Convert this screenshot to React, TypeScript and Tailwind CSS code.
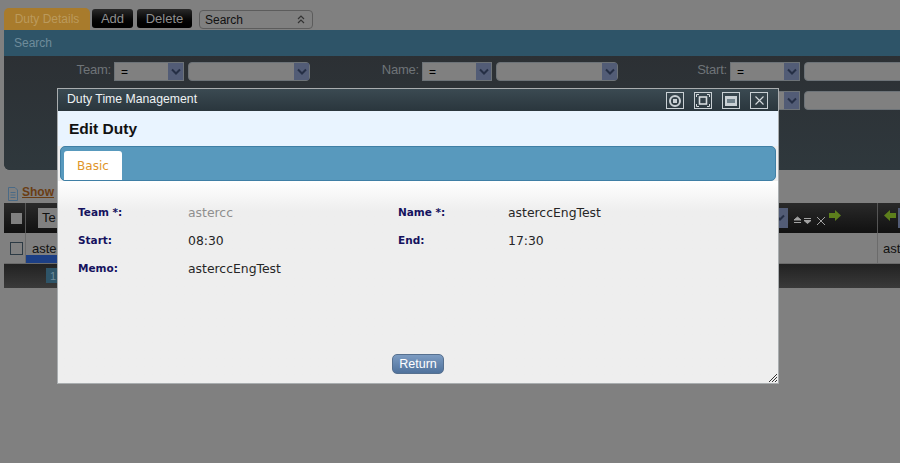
const Chevron = () => (
  <svg width="10" height="8" viewBox="0 0 10 8" fill="none" stroke="#252f45" strokeWidth="2">
    <path d="M1 1.5 L5 5.5 L9 1.5" />
  </svg>
);

const SelectBox = ({ value, width }: { value?: string; width: string }) => (
  <div
    className={`${width} shrink-0 h-[19px] flex items-center justify-between bg-[#808080] border border-[#6d7378] ${
      value ? "" : "rounded-[4px]"
    }`}
  >
    <span className="pl-1.5 text-[12px] text-black">{value}</span>
    <span className="w-[15px] h-[17px] bg-[#525c76] flex items-center justify-center">
      <Chevron />
    </span>
  </div>
);

const Filter = ({ label, labelWidth, wide }: { label?: string; labelWidth: string; wide: string }) => (
  <div className="flex items-center shrink-0">
    <span className={`${labelWidth} shrink-0 text-right pr-[3px] text-[13px] tracking-[-0.2px] text-[#6f7478] -mt-[3px]`}>{label}</span>
    <SelectBox value="=" width="w-[70px]" />
    <div className="w-1 shrink-0" />
    <SelectBox width={wide} />
  </div>
);

const Field = ({ label, value, muted }: { label: string; value: string; muted?: boolean }) => (
  <div className="flex items-center h-[28px] font-['DejaVu_Sans',sans-serif]">
    <span className="w-[110px] text-[10.5px] font-bold text-[#15125e]">{label}</span>
    <span className={`text-[12.4px] ${muted ? "text-[#8f8f8f]" : "text-[#262626]"}`}>{value}</span>
  </div>
);

const WinButton = ({ children }: { children: React.ReactNode }) => (
  <div className="w-[18px] h-[17px] border border-[#c9d0d4] flex items-center justify-center">
    {children}
  </div>
);

const DutyModal = () => (
  <div className="absolute left-[57px] top-[88px] w-[722px] h-[296px] flex flex-col border border-[#a9adaf] bg-[#eeeeee]">
    <div className="h-[22px] shrink-0 flex items-start justify-between pl-[9px] pr-[10px] pt-[3px] bg-gradient-to-b from-[#3b4a52] to-[#2a363d]">
      <span className="text-[12.25px] leading-[14px] text-[#eef2f4]">Duty Time Management</span>
      <div className="flex gap-[10px]">
        <WinButton>
          <div className="w-[12px] h-[12px] rounded-full border-2 border-[#c9d0d4] flex items-center justify-center">
            <div className="w-[4px] h-[4px] bg-[#c9d0d4]" />
          </div>
        </WinButton>
        <WinButton>
          <svg width="14" height="13" viewBox="0 0 14 13" fill="none" stroke="#d5dadd">
            <rect x="3.5" y="3" width="7" height="7" strokeWidth="1.6" />
            <path d="M0.5 3 V0.5 H3 M11 0.5 H13.5 V3 M0.5 10 V12.5 H3 M11 12.5 H13.5 V10" />
          </svg>
        </WinButton>
        <WinButton>
          <div className="w-[12px] h-[10px] bg-[#c9d0d4] flex items-center justify-center">
            <div className="w-[8px] h-[4px] bg-[#6f8089]" />
          </div>
        </WinButton>
        <WinButton>
          <svg width="9" height="9" viewBox="0 0 9 9" stroke="#d5dadd" strokeWidth="1.1">
            <path d="M0.5 0.5 L8.5 8.5 M8.5 0.5 L0.5 8.5" />
          </svg>
        </WinButton>
      </div>
    </div>
    <div className="h-[35px] shrink-0 bg-[#e9f4ff] flex items-center pl-[11px]">
      <h1 className="text-[15.5px] font-bold text-[#111111]">Edit Duty</h1>
    </div>
    <div className="mx-[2px] h-[35px] shrink-0 bg-[#5899bd] border border-[#3f7fa5] rounded-[5px] flex items-end pl-[3px]">
      <div className="w-[58px] h-[29px] bg-white rounded-t-[3px] flex items-center justify-center text-[12px] font-['DejaVu_Sans',sans-serif] text-[#e0962a]">
        Basic
      </div>
    </div>
    <div className="relative flex-1 bg-gradient-to-b from-white to-[#eeeeee] to-[15%] flex flex-col">
      <div className="grid grid-cols-[320px_1fr] pl-[20px] pt-[18px]">
        <Field label="Team *:" value="astercc" muted />
        <Field label="Name *:" value="asterccEngTest" />
        <Field label="Start:" value="08:30" />
        <Field label="End:" value="17:30" />
        <Field label="Memo:" value="asterccEngTest" />
      </div>
      <div className="flex-1 flex items-end justify-center pb-[9px]">
        <button className="w-[52px] h-[20px] rounded-[5px] border border-[#56708f] bg-gradient-to-b from-[#7d9cc2] to-[#4f729c] text-[12.5px] text-white">
          Return
        </button>
      </div>
      <svg className="absolute right-[1px] bottom-[1px]" width="8" height="8" viewBox="0 0 8 8" stroke="#333333">
        <path d="M0 8 L8 0 M3 8 L8 3 M6 8 L8 6" />
      </svg>
    </div>
  </div>
);

export default function App() {
  return (
    <div className="relative w-[900px] h-[463px] overflow-hidden bg-[#808080] font-['Liberation_Sans',sans-serif]">
      <div className="pt-2 pl-[4px]">
        <div className="flex items-start h-[22px]">
          <div className="w-[86px] h-[22px] bg-[#a87b2c] rounded-t-[5px] flex items-center justify-center text-[12px] text-[#bb9a5c]">
            Duty Details
          </div>
          <button className="ml-[2px] mt-[1px] w-[41px] h-[19px] rounded-[3px] bg-gradient-to-b from-[#2a2a2a] to-black text-[13px] text-[#8f8f8f]">
            Add
          </button>
          <button className="ml-1 mt-[1px] w-[55px] h-[19px] rounded-[3px] bg-gradient-to-b from-[#2a2a2a] to-black text-[13px] text-[#8f8f8f]">
            Delete
          </button>
          <div className="ml-[7px] mt-[2px] w-[114px] h-[19px] rounded-[4px] border border-[#5c5c5c] flex items-center justify-between pl-[5px] pr-[7px] text-[12px] text-[#111111]">
            Search
            <svg width="8" height="9" viewBox="0 0 8 9" fill="none" stroke="#333333" strokeWidth="1.2">
              <path d="M1 4 L4 1 L7 4 M1 8 L4 5 L7 8" />
            </svg>
          </div>
        </div>
        <div className="h-[140px] rounded-bl-[6px] bg-[#2e343a] overflow-hidden">
          <div className="h-[26px] bg-[#2e5468] flex items-center pl-[10px] text-[12px] text-[#6f8c9b]">Search</div>
          <div className="h-[114px] bg-gradient-to-b from-[#2c3034] to-[#2f383d] pt-[6px]">
            <div className="flex">
              <div className="w-[306px] shrink-0">
                <Filter label="Team:" labelWidth="w-[110px]" wide="w-[122px]" />
              </div>
              <div className="w-[308px] shrink-0">
                <Filter label="Name:" labelWidth="w-[112px]" wide="w-[122px]" />
              </div>
              <Filter label="Start:" labelWidth="w-[112px]" wide="w-[140px]" />
            </div>
            <div className="flex mt-[10px] pl-[614px]">
              <Filter labelWidth="w-[112px]" wide="w-[140px]" />
            </div>
          </div>
        </div>
        <div className="h-[33px] flex items-end pb-[2px] pl-[3px] gap-[3px]">
          <svg width="12" height="14" viewBox="0 0 12 14" fill="none" stroke="#4a6a86">
            <path d="M1.5 0.5 H8 L10.5 3 V13.5 H1.5 Z M3.5 5.5 H8.5 M3.5 8 H8.5 M3.5 10.5 H8.5" />
          </svg>
          <span className="text-[12px] font-bold underline text-[#6a3d14]">Show</span>
        </div>
        <div className="h-[30px] bg-gradient-to-b from-[#2a2a2a] to-[#111111] flex items-center">
          <div className="w-[22px] shrink-0 h-full border-r border-[#555555] flex items-center pl-[7px]">
            <div className="w-[11px] h-[11px] bg-[#808080]" />
          </div>
          <div className="ml-[12px] w-[30px] h-[20px] bg-[#808080] text-[13px] text-[#111111] pl-1 leading-[20px]">Te</div>
          <div className="ml-auto flex items-center h-full">
            <div className="w-[16px] h-[20px] bg-[#525c76] flex items-center justify-center">
              <Chevron />
            </div>
            <svg className="ml-[5px] mt-[5px]" width="34" height="10" viewBox="0 0 34 10" stroke="#a3a3a3">
              <path d="M1 4 L4.5 1 L8 4 Z M1 6.5 H8 M11 2.5 H18 M11 4.5 L14.5 7.5 L18 4.5 Z M24 1 L32 9 M32 1 L24 9" fill="#a3a3a3" />
            </svg>
            <svg className="ml-[2px] -mt-[5px]" width="12" height="11" viewBox="0 0 12 11" fill="#5d7f1c">
              <path d="M0 3 H6 V0 L12 5.5 L6 11 V8 H0 Z" />
            </svg>
            <div className="w-[36px]" />
            <div className="w-px h-full bg-[#555555]" />
            <svg className="ml-[6px] -mt-[5px]" width="12" height="11" viewBox="0 0 12 11" fill="#5d7f1c">
              <path d="M12 3 H6 V0 L0 5.5 L6 11 V8 H12 Z" />
            </svg>
            <div className="ml-[2px] w-[2px] h-[20px] bg-[#525c76]" />
          </div>
        </div>
        <div className="h-[31px] bg-[#808080] border-b border-[#6b6b6b] flex relative">
          <div className="w-[22px] shrink-0 border-r border-[#6b6b6b] flex items-center pl-[6px]">
            <div className="w-[13px] h-[13px] border border-[#2c3a44]" />
          </div>
          <div className="flex-1 pl-[6px] pt-[6px] text-[13px] text-[#111111]">aste</div>
          <div className="w-[23px] shrink-0 border-l border-[#6b6b6b] pl-[5px] pt-[6px] text-[13px] text-[#111111]">ast</div>
          <div className="absolute left-[22px] bottom-0 w-[40px] h-[8px] bg-[#1c3f85]" />
        </div>
        <div className="h-[24px] bg-gradient-to-b from-[#222222] to-[#3a3a3a] pl-[42px] pt-[4px]">
          <div className="w-[14px] h-[15px] bg-[#2e5468] text-[11px] text-[#6f8c9b] pl-1">1</div>
        </div>
      </div>
      <DutyModal />
    </div>
  );
}
